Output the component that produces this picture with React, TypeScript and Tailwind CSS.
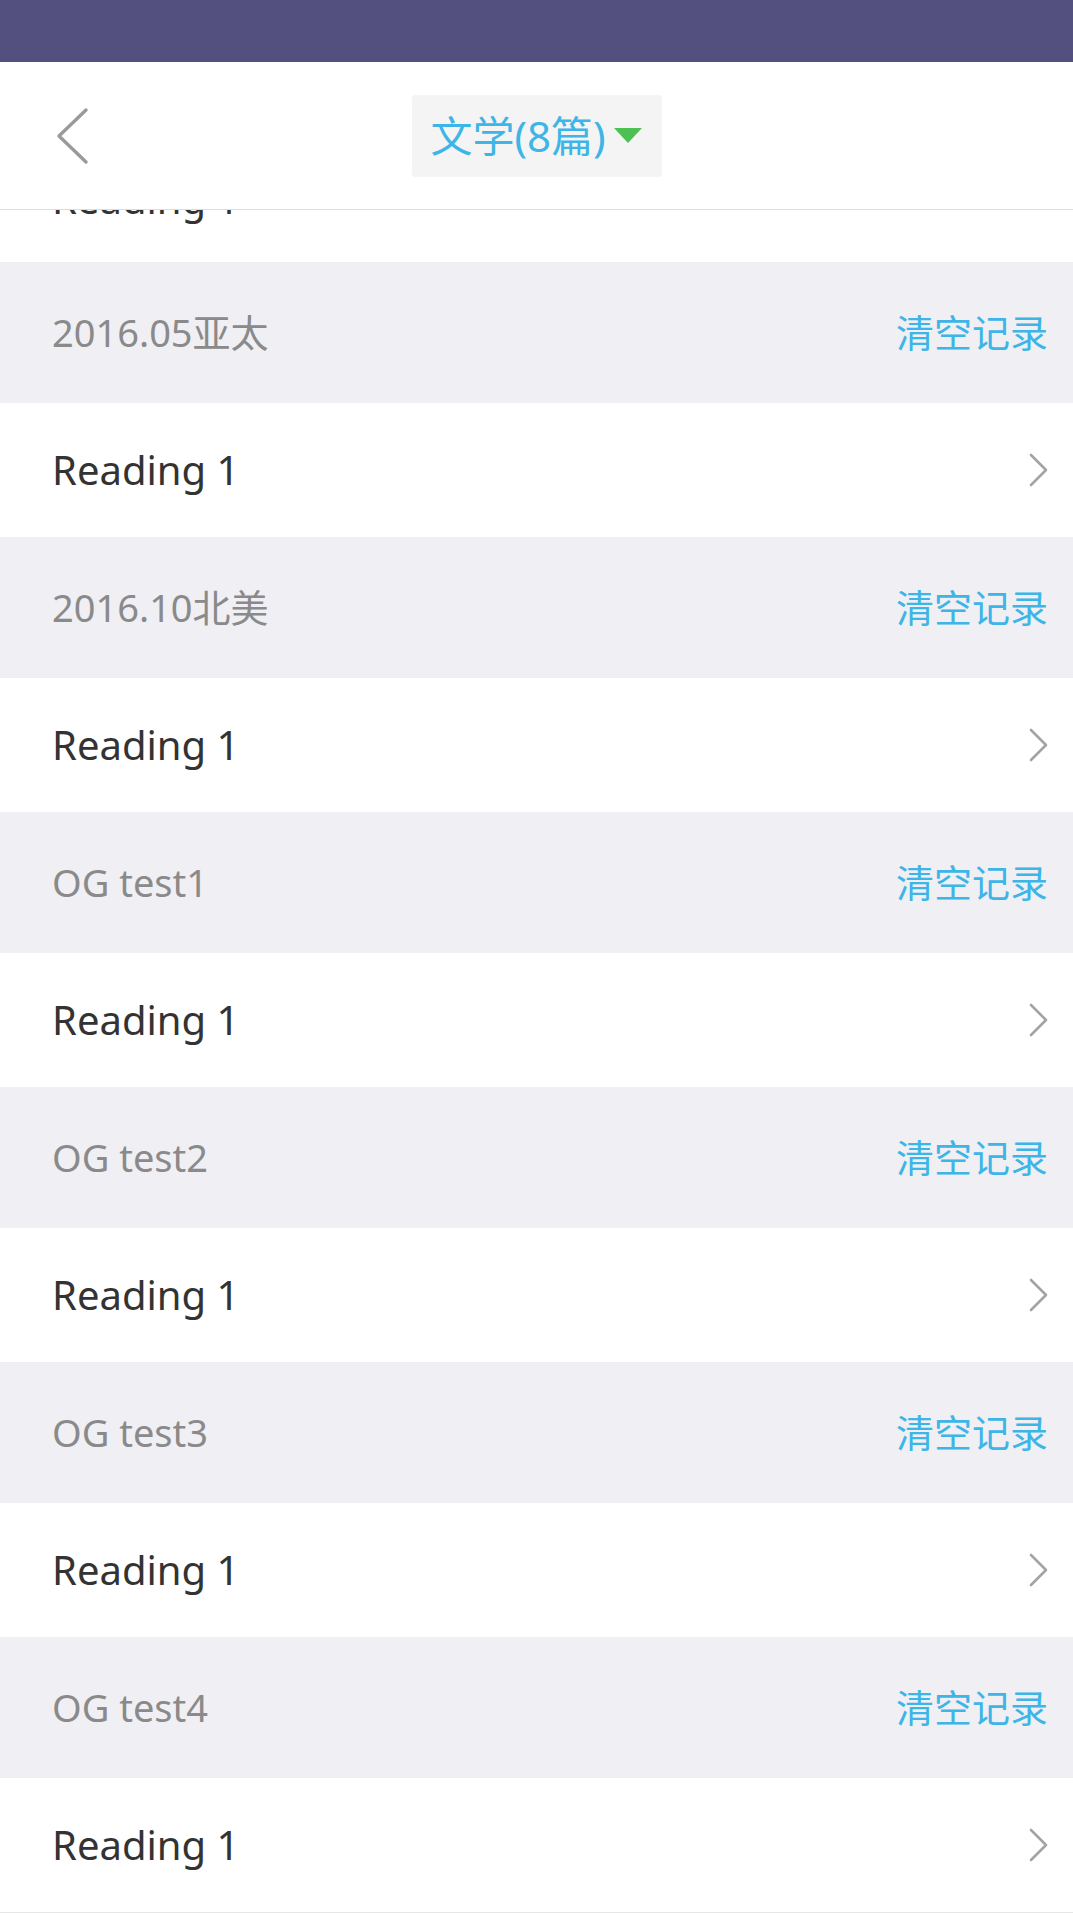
import React from 'react';

const sections = ['2016.05亚太', '2016.10北美', 'OG test1', 'OG test2', 'OG test3', 'OG test4'];

function ChevronRight() {
  return (
    <svg width="20" height="34" viewBox="0 0 20 34" fill="none">
      <polyline points="2,2 17,17 2,32" stroke="#a3a3a3" strokeWidth="2.6" strokeLinecap="round" strokeLinejoin="round" />
    </svg>
  );
}

function ReadingRow({title}: {title: string}) {
  return (
    <div className="flex h-[134px] shrink-0 items-center justify-between bg-white pl-[52px] pr-[24px]">
      <span className="text-[40px] text-[#333333]">{title}</span>
      <ChevronRight />
    </div>
  );
}

function SectionHeader({title}: {title: string}) {
  return (
    <div className="flex h-[141px] items-center justify-between bg-[#efeff4] pl-[52px] pr-[25px]">
      <span className="text-[38px] text-[#8a8a8a]">{title}</span>
      <button className="text-[38px] text-[#3db5e7]">清空记录</button>
    </div>
  );
}

export default function App() {
  return (
    <div
      className="flex h-[1913px] w-[1073px] flex-col overflow-hidden bg-white"
      style={{fontFamily: '"Noto Sans", "Noto Sans CJK SC", sans-serif'}}
    >
      {/* status bar */}
      <div className="h-[62px] shrink-0 bg-[#53507f]" />

      {/* nav bar */}
      <header className="relative z-10 flex h-[148px] shrink-0 items-center justify-center border-b border-[#dcdcdc] bg-white">
        <button className="absolute left-[52px] top-[44px]">
          <svg width="40" height="60" viewBox="0 0 40 60" fill="none">
            <polyline points="34,4 7,30 34,56" stroke="#9a9a9a" strokeWidth="3.4" strokeLinecap="round" strokeLinejoin="round" />
          </svg>
        </button>
        <div className="flex h-[82px] w-[250px] items-center gap-[8px] rounded-[4px] bg-[#f4f4f4] pl-[19px]">
          <span className="text-[42px] leading-none text-[#3db5e7]">文学(8篇)</span>
          <svg width="28" height="16" viewBox="0 0 28 16">
            <polygon points="0,0 28,0 14,15" fill="#4cc052" />
          </svg>
        </div>
      </header>

      {/* list, scrolled so the first row sits mostly under the nav bar */}
      <div className="flex flex-1 flex-col">
        <div className="relative h-[52px] shrink-0 overflow-hidden bg-white">
          <span className="absolute bottom-[43px] left-[52px] text-[40px] leading-none text-[#333333]">Reading 1</span>
        </div>
        {sections.map((s) => (
          <div key={s} className="flex flex-col">
            <SectionHeader title={s} />
            <ReadingRow title="Reading 1" />
          </div>
        ))}
        <div className="h-px bg-[#e6e6e6]" />
      </div>
    </div>
  );
}
